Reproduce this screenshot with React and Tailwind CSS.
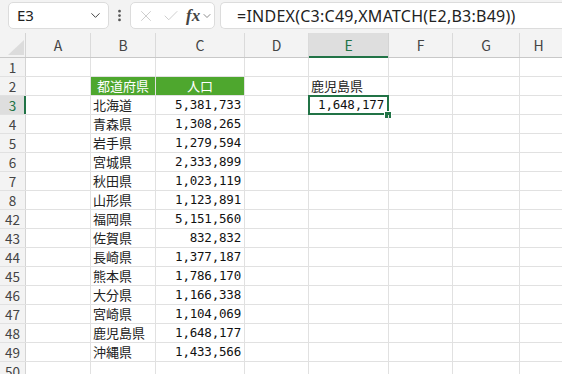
import { ChevronDown, X, Check, EllipsisVertical } from 'lucide-react';

const rows = [
  { n: 1 },
  { n: 2, header: true, e: '鹿児島県' },
  { n: 3, b: '北海道', c: '5,381,733', e: '1,648,177', selected: true },
  { n: 4, b: '青森県', c: '1,308,265' },
  { n: 5, b: '岩手県', c: '1,279,594' },
  { n: 6, b: '宮城県', c: '2,333,899' },
  { n: 7, b: '秋田県', c: '1,023,119' },
  { n: 8, b: '山形県', c: '1,123,891' },
  { n: 42, b: '福岡県', c: '5,151,560' },
  { n: 43, b: '佐賀県', c: '832,832' },
  { n: 44, b: '長崎県', c: '1,377,187' },
  { n: 45, b: '熊本県', c: '1,786,170' },
  { n: 46, b: '大分県', c: '1,166,338' },
  { n: 47, b: '宮崎県', c: '1,104,069' },
  { n: 48, b: '鹿児島県', c: '1,648,177' },
  { n: 49, b: '沖縄県', c: '1,433,566' },
  { n: 50 },
];

const cols = [
  { id: 'A', w: 'w-[65px]' },
  { id: 'B', w: 'w-[65px]' },
  { id: 'C', w: 'w-[89px]' },
  { id: 'D', w: 'w-[64px]' },
  { id: 'E', w: 'w-[80px]' },
  { id: 'F', w: 'w-[64px]' },
  { id: 'G', w: 'w-[67px]' },
];

const cellFont = { fontFamily: '"Noto Sans CJK JP", "Noto Sans", sans-serif' };
const numFont = { fontFamily: '"DejaVu Sans Mono", monospace' };

const Cell = ({ w, className = '', children }) => (
  <div className={`${w} shrink-0 h-full border-r border-[#e1e1e1] flex items-center overflow-visible whitespace-nowrap ${className}`}>
    {children}
  </div>
);

const Num = ({ children }) => (
  <span className="text-[12.5px] tracking-[-0.2px] text-[#111]" style={numFont}>
    {children}
  </span>
);

export default function App() {
  return (
    <div className="w-[562px] h-[374px] overflow-hidden bg-white text-[#222]" style={{ fontFamily: '"Noto Sans", sans-serif' }}>
      {/* Formula bar */}
      <div className="h-[33px] bg-[#f3f3f3] flex items-start pt-[2px] pl-[8px] gap-0">
        <div className="w-[101px] h-[27px] bg-white border border-[#dcdcdc] rounded-[5px] flex items-center pl-[8px] pr-[5px]">
          <span className="text-[15px] text-[#222] flex-1">E3</span>
          <ChevronDown size={15} strokeWidth={1.6} className="text-[#444]" />
        </div>
        <div className="w-[21px] h-[27px] flex items-center justify-center">
          <EllipsisVertical size={15} strokeWidth={2.4} className="text-[#555]" />
        </div>
        <div className="w-[85px] h-[27px] bg-white border border-[#dcdcdc] rounded-[5px] flex items-center pl-[6px] gap-[7px]">
          <X size={18} strokeWidth={1.1} className="text-[#c4c4c4]" />
          <Check size={18} strokeWidth={1.1} className="text-[#c4c4c4]" />
          <span className="flex items-center -ml-[1px]">
            <span className="text-[17px] italic font-bold text-[#444] leading-none" style={{ fontFamily: '"Liberation Serif", serif' }}>fx</span>
            <ChevronDown size={12} strokeWidth={1.5} className="text-[#666] ml-[1px]" />
          </span>
        </div>
        <div className="ml-[5px] flex-1 h-[27px] bg-white border border-[#dcdcdc] border-r-0 rounded-l-[5px] flex items-center pl-[16px]">
          <span className="text-[16px] text-[#222] tracking-[0.25px]">=INDEX(C3:C49,XMATCH(E2,B3:B49))</span>
        </div>
      </div>

      {/* Column headers */}
      <div className="h-[25px] flex bg-[#f3f3f3] border-b border-[#c8c8c8]" style={cellFont}>
        <div className="w-[26px] shrink-0 h-full border-r border-[#d4d4d4] relative">
          <svg width="16" height="15" viewBox="0 0 16 15" className="absolute left-[8px] top-[7px]">
            <path d="M16 0 L16 15 L0 15 Z" fill="#dcdcdc" />
          </svg>
        </div>
        {cols.map((c) =>
          c.id === 'E' ? (
            <div
              key={c.id}
              className={`${c.w} shrink-0 h-full border-r border-[#d4d4d4] bg-[#dedede] flex items-center justify-center text-[14px] text-[#217346] relative`}
            >
              {c.id}
              <div className="absolute left-0 right-0 -bottom-[1px] h-[2px] bg-[#217346]" />
            </div>
          ) : (
            <div
              key={c.id}
              className={`${c.w} shrink-0 h-full border-r border-[#dadada] flex items-center justify-center text-[14px] text-[#444]`}
            >
              {c.id}
            </div>
          )
        )}
        <div className="flex-1 h-full flex items-center justify-center text-[14px] text-[#444] pr-[5px]">H</div>
      </div>

      {/* Rows */}
      <div style={cellFont} className="text-[13px]">
        {rows.map((r) => (
          <div key={r.n} className="h-[19px] flex border-b border-[#e1e1e1]">
            <div
              className={`w-[26px] shrink-0 h-full flex items-center justify-center text-[13.5px] relative ${
                r.selected ? 'bg-[#dedede] text-[#217346]' : 'bg-[#f3f3f3] text-[#444]'
              } border-r ${r.selected ? 'border-[#217346]' : 'border-[#d4d4d4]'}`}
            >
              {r.n}
              {r.selected && <div className="absolute -right-[1px] top-0 bottom-0 w-[2px] bg-[#217346]" />}
            </div>
            <Cell w="w-[65px]" />
            <Cell
              w="w-[65px]"
              className={r.header ? 'bg-[#4ea72e] text-white justify-center border-[#4ea72e]' : 'pl-[2px]'}
            >
              {r.header ? '都道府県' : r.b}
            </Cell>
            <Cell
              w="w-[89px]"
              className={r.header ? 'bg-[#4ea72e] text-white justify-center border-[#4ea72e]' : 'justify-end pr-[3px]'}
            >
              {r.header ? '人口' : r.c && <Num>{r.c}</Num>}
            </Cell>
            <Cell w="w-[64px]" />
            <Cell w="w-[80px]" className={`relative ${r.selected ? 'justify-end pr-[4px]' : 'pl-[2px]'}`}>
              {r.selected ? <Num>{r.e}</Num> : r.e}
              {r.selected && (
                <>
                  <div className="absolute -left-[1px] -top-[1px] -right-[1px] -bottom-[1px] border-2 border-[#217346]" />
                  <div className="absolute -right-[4px] -bottom-[5px] w-[8px] h-[8px] bg-[#217346] border border-white" />
                </>
              )}
            </Cell>
            <Cell w="w-[64px]" />
            <Cell w="w-[67px]" />
            <div className="flex-1 h-full" />
          </div>
        ))}
      </div>
    </div>
  );
}
